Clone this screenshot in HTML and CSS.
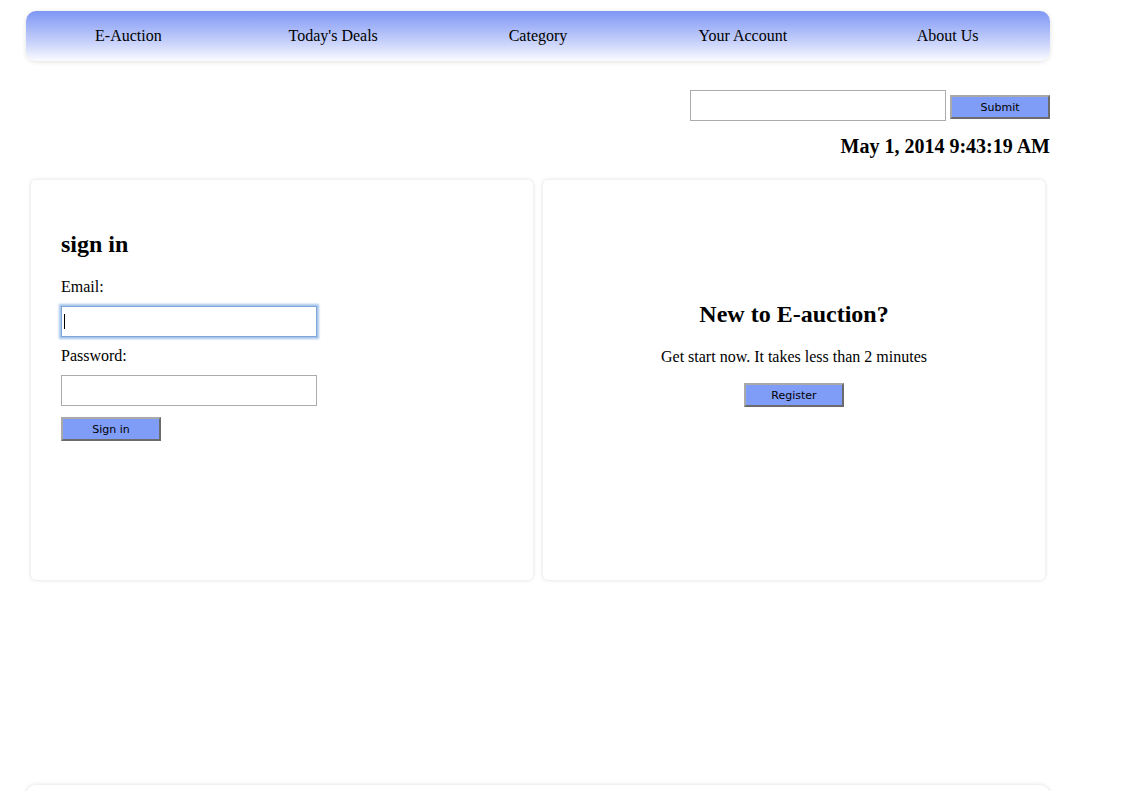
FILE: index.html
```html
<!DOCTYPE html>
<html>
<head>
<meta charset="utf-8">
<title>E-Auction</title>
<link rel="stylesheet" href="styles.css">
</head>
<body>
<div class="page">
  <nav class="nav">
    <a class="nav-item" href="#">E-Auction</a>
    <a class="nav-item" href="#">Today's Deals</a>
    <a class="nav-item" href="#">Category</a>
    <a class="nav-item" href="#">Your Account</a>
    <a class="nav-item" href="#">About Us</a>
  </nav>
  <div class="search-row">
    <input class="search-input" type="text">
    <button class="btn btn-submit">Submit</button>
  </div>
  <h3 class="date">May 1, 2014 9:43:19 AM</h3>
  <div class="cards">
    <div class="card card-signin">
      <h2 class="card-title">sign in</h2>
      <label class="field-label">Email:</label>
      <div class="field-wrap"><input class="field field-focus" type="text"><span class="caret"></span></div>
      <label class="field-label">Password:</label>
      <div class="field-wrap"><input class="field" type="password"></div>
      <button class="btn btn-signin">Sign in</button>
    </div>
    <div class="card card-register">
      <h2 class="card-title">New to E-auction?</h2>
      <p class="card-text">Get start now. It takes less than 2 minutes</p>
      <button class="btn btn-register">Register</button>
    </div>
  </div>
  <div class="footer"></div>
</div>
</body>
</html>
```
FILE: styles.css
```css
html, body {
  margin: 0;
  padding: 0;
  background: #ffffff;
  font-family: "Liberation Serif", "Times New Roman", serif;
  font-size: 16px;
  color: #000;
}
.page {
  width: 1024px;
  margin-left: 26px;
  padding-top: 11px;
}
.nav {
  display: flex;
  height: 50px;
  border-radius: 10px;
  background: linear-gradient(to bottom, #7f97f5 0%, #c4cffa 60%, #fbfbff 100%);
  box-shadow: 0 1px 5px rgba(0, 0, 0, 0.12);
}
.nav-item {
  flex: 1;
  display: flex;
  align-items: center;
  justify-content: center;
  color: #000;
  text-decoration: none;
  font-size: 16px;
}
.search-row {
  display: flex;
  justify-content: flex-end;
  align-items: flex-start;
  gap: 4px;
  margin-top: 29px;
}
.search-input {
  width: 256px;
  height: 31px;
  box-sizing: border-box;
  border: 1px solid #ababab;
  margin: 0;
  padding: 0 4px;
  font-size: 14px;
}
.btn {
  width: 100px;
  height: 24px;
  box-sizing: border-box;
  background: #7f9cf7;
  border: 2px solid;
  border-color: #a9a9a9 #6b6b6b #6b6b6b #a9a9a9;
  font-family: "DejaVu Sans", "Open Sans", sans-serif;
  font-size: 11px;
  color: #000;
  padding: 0;
  margin: 0;
}
.btn-submit {
  margin-top: 5px;
}
.date {
  text-align: right;
  font-size: 20px;
  font-weight: bold;
  margin: 14px 0 0 0;
  line-height: 22px;
}
.cards {
  display: flex;
  margin-top: 23px;
}
.card {
  width: 502px;
  height: 400px;
  margin: 0 5px;
  box-sizing: border-box;
  background: #fff;
  border-radius: 5px;
  box-shadow: 0 0 4px rgba(0, 0, 0, 0.14);
}
.card-signin {
  padding: 50px 30px 0 30px;
}
.card-title {
  font-size: 24px;
  font-weight: bold;
  margin: 0;
  line-height: 28px;
}
.card-signin .card-title {
  margin-bottom: 20px;
}
.field-label {
  display: block;
  line-height: 18px;
}
.field-wrap {
  position: relative;
  width: 256px;
  margin: 10px 0 10px 0;
}
.field {
  display: block;
  width: 256px;
  height: 31px;
  box-sizing: border-box;
  border: 1px solid #ababab;
  margin: 0;
  padding: 0 4px;
  font-size: 14px;
  outline: none;
}
.field-focus {
  border: 1px solid #7ea6d8;
  box-shadow: 0 0 2px 2px #a4c4ea;
}
.caret {
  position: absolute;
  left: 3px;
  top: 8px;
  width: 1px;
  height: 15px;
  background: #000;
}
.btn-signin {
  display: block;
  margin-top: 11px;
}
.card-register {
  display: flex;
  flex-direction: column;
  align-items: center;
  padding-top: 120px;
}
.card-text {
  margin: 20px 0 17px 0;
  line-height: 18px;
}
.footer {
  height: 40px;
  margin-top: 205px;
  border-radius: 10px;
  background: #fff;
  box-shadow: 0 0 5px rgba(0, 0, 0, 0.14);
}
```
